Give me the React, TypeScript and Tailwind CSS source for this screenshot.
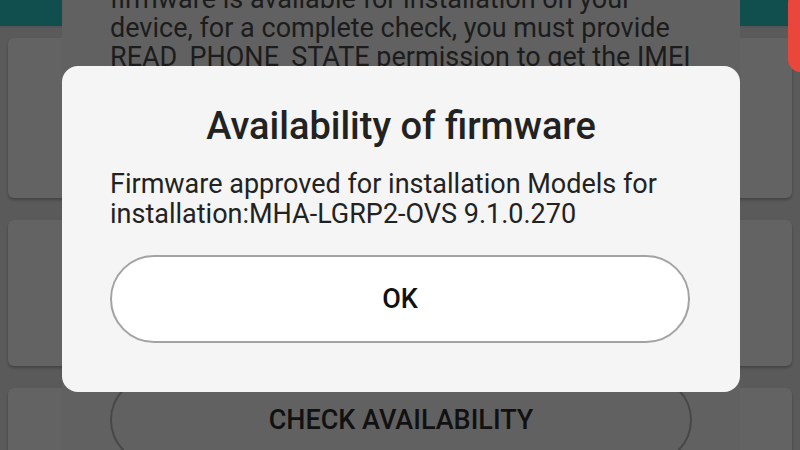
const font = { fontFamily: "Roboto, 'Noto Sans', sans-serif" };

function BackCard({ className }: { className: string }) {
  return <div className={`rounded-md bg-[#636363] shadow-[0_2px_3px_rgba(0,0,0,0.25)] ${className}`} />;
}

export default function App() {
  return (
    <div className="relative w-[800px] h-[450px] overflow-hidden bg-[#5a5a5a]" style={font}>
      {/* page behind the dialogs */}
      <div className="h-[28px] bg-[#114e4e] border-b-2 border-[#555]" />
      <div className="flex flex-col gap-[22px] px-2 pt-[10px]">
        <BackCard className="h-[160px]" />
        <BackCard className="h-[146px]" />
        <BackCard className="h-[120px]" />
      </div>
      <div className="absolute right-[-14px] top-[-10px] w-[26px] h-[82px] rounded-full bg-[#e9473b]" />

      {/* first dialog (permission) */}
      <div className="absolute left-[62px] top-[-15px] w-[678px] h-[520px] bg-[#616161] px-12">
        <p className="text-[27px] leading-[29px] text-[#1c1c1c] whitespace-nowrap">
          <span className="block">firmware is available for installation on your</span>
          <span className="block">device, for a complete check, you must provide</span>
          <span className="block">READ_PHONE_STATE permission to get the IMEI</span>
        </p>
        <div className="mt-[304px] h-[88px] rounded-full border-2 border-[#474747] flex items-center justify-center">
          <span className="text-[27px] font-medium text-[#111]">CHECK AVAILABILITY</span>
        </div>
      </div>

      {/* availability dialog */}
      <div className="absolute left-[62px] top-[66px] w-[678px] h-[326px] rounded-[16px] bg-[#f5f5f5] px-12 pt-[38px]">
        <h2 className="text-center text-[38px] leading-[45px] font-medium text-[#222]">
          Availability of firmware
        </h2>
        <p className="mt-[20px] text-[27px] leading-[30px] text-[#222]">
          Firmware approved for installation Models for installation:MHA-LGRP2-OVS 9.1.0.270
        </p>
        <button className="mt-[26px] w-[580px] h-[88px] rounded-full border-2 border-[#a3a3a3] bg-white text-[27px] font-medium text-[#111]">
          OK
        </button>
      </div>
    </div>
  );
}
